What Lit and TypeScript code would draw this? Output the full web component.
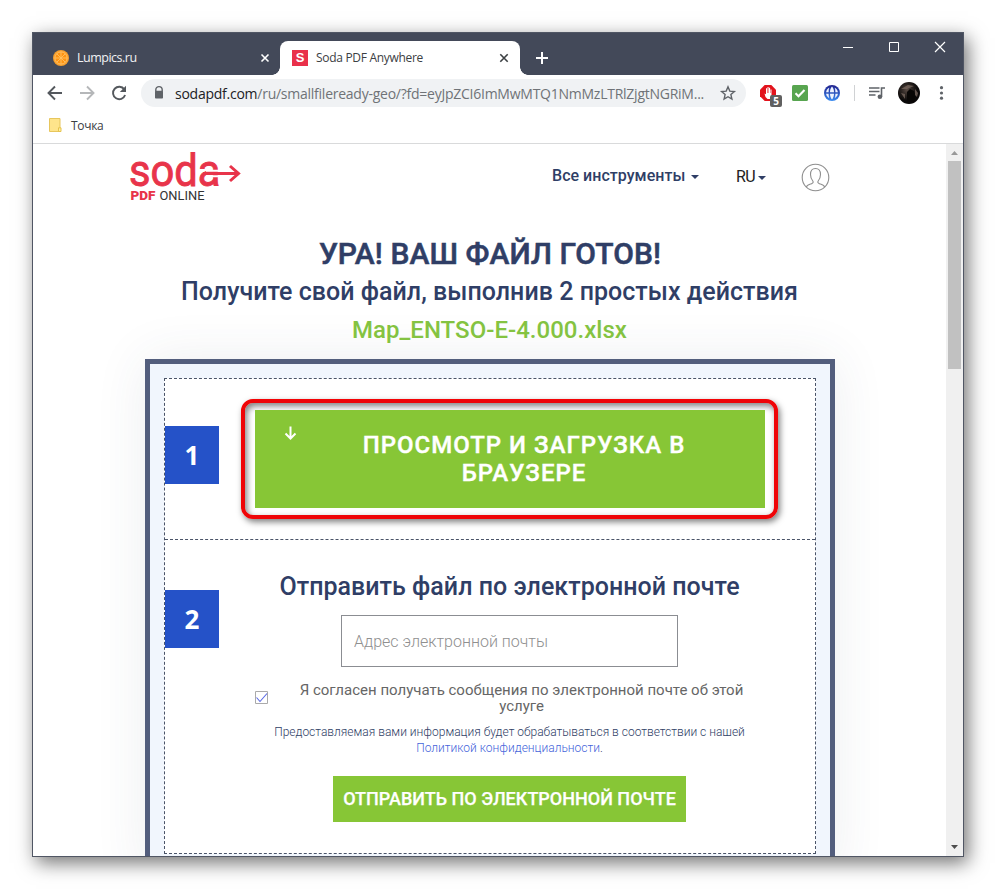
import { LitElement, html, css, svg } from "lit";
import { customElement } from "lit/decorators.js";

@customElement("browser-tabs")
class BrowserTabs extends LitElement {
  static styles = css`
    :host { display: flex; height: 42px; background: #434959; font: 12px/16px "Open Sans", "Noto Sans", sans-serif; color: #f1f2f4; }
    svg { display: block; flex: none; }
    .tab { display: flex; align-items: center; box-sizing: border-box; }
    .idle { width: 247px; padding: 8px 10px 0 20px; }
    .live { width: 240px; margin-top: 8px; padding: 0 11px 0 12px; background: #fff; border-radius: 8px 8px 0 0; color: #3c4043; position: relative; }
    .live::before, .live::after { content: ""; position: absolute; bottom: 0; width: 8px; height: 8px; }
    .live::before { left: -8px; background: radial-gradient(circle at 0 0, #434959 7.5px, #fff 8px); }
    .live::after { right: -8px; background: radial-gradient(circle at 100% 0, #434959 7.5px, #fff 8px); }
    .name { flex: 1; white-space: nowrap; }
    .idle .name { margin-left: 8px; letter-spacing: -0.2px; }
    .live .name { margin-left: 8px; letter-spacing: -0.3px; }
    .idle .name { letter-spacing: -0.5px; font-size: 12.5px; }
    .fav { width: 16px; height: 16px; background: #e9304a; color: #fff; font: 700 13px/16px "Liberation Sans", sans-serif; text-align: center; }
    .plus { margin: 18px 0 0 15px; }
    .controls { margin: 7px 17px 0 auto; display: flex; gap: 34px; }
  `;
  render() {
    return html`
      <div class="tab idle">
        <svg width="16" height="16" viewBox="0 0 16 16">
          <circle cx="8" cy="8" r="8" fill="#f9a02c" /><circle cx="8" cy="8" r="6.1" fill="#ff9412" stroke="#ffc56e" stroke-width=".8" />
          <path d="M8 2v12M2 8h12M3.8 3.8l8.4 8.4M12.2 3.8l-8.4 8.4" stroke="#ffc264" stroke-width=".9" />
        </svg>
        <span class="name">Lumpics.ru</span>
        <svg width="10" height="10" viewBox="0 0 10 10"><path d="M1.5 1.5l7 7M8.5 1.5l-7 7" stroke="#fff" stroke-width="1.6" /></svg>
      </div>
      <div class="tab live">
        <span class="fav">S</span><span class="name">Soda PDF Anywhere</span>
        <svg width="10" height="10" viewBox="0 0 10 10"><path d="M1.3 1.3l7.4 7.4M8.7 1.3L1.3 8.7" stroke="#3c4043" stroke-width="1.6" /></svg>
      </div>
      <svg class="plus" width="14" height="14" viewBox="0 0 14 14"><path d="M7 1v12M1 7h12" stroke="#fff" stroke-width="2" /></svg>
      <div class="controls">
        <svg width="14" height="14" viewBox="0 0 14 14"><path d="M3 7.5h10" stroke="#fff" /></svg>
        <svg width="12" height="14" viewBox="0 0 12 14"><path d="M1.5 2.5h9v9h-9z" fill="none" stroke="#fff" /></svg>
        <svg width="12" height="14" viewBox="0 0 12 14"><path d="M1 2l10 10M11 2L1 12" stroke="#fff" stroke-width="1.2" /></svg>
      </div>`;
  }
}

@customElement("browser-toolbar")
class BrowserToolbar extends LitElement {
  static styles = css`
    :host { display: block; background: #fff; height: 68px; border-bottom: 1px solid #d9dadb; font-family: "Open Sans", "Noto Sans", sans-serif; }
    svg { display: block; flex: none; }
    .bar { display: flex; align-items: center; height: 36px; padding-left: 12px; }
    .nav { display: flex; gap: 12px; }
    .omni { display: flex; align-items: center; width: 605px; height: 28px; margin-left: 12px; padding: 0 8px 0 9px; box-sizing: border-box; border-radius: 14px; background: #f0f2f4; }
    .url { flex: 1; margin-left: 7px; font-size: 14px; color: #6f7377; white-space: nowrap; letter-spacing: -0.25px; }
    .host { color: #202124; }
    .ext { display: flex; align-items: center; margin-left: 14px; }
    .block { position: relative; width: 22px; height: 28px; margin-right: 10px; }
    .block svg { margin-top: 6px; }
    .count { position: absolute; left: 10px; top: 16px; width: 12px; height: 12px; border-radius: 2px; background: #606060; color: #fff; font: 700 10px/12px "Open Sans", sans-serif; text-align: center; }
    .rule { width: 1px; height: 16px; background: #d0d2d4; margin: 0 13px 0 14px; }
    .marks { display: flex; align-items: center; gap: 9px; height: 28px; padding-left: 16px; font-size: 12px; color: #3c4043; }
    .marks span { letter-spacing: -0.3px; }
  `;
  render() {
    return html`
      <div class="bar">
        <div class="nav">
          <svg width="20" height="20" viewBox="0 0 20 20"><path d="M17 10H4M10 3.5L3.5 10l6.5 6.5" fill="none" stroke="#54585d" stroke-width="1.9" /></svg>
          <svg width="20" height="20" viewBox="0 0 20 20"><path d="M3 10h13M10 3.5L16.5 10 10 16.5" fill="none" stroke="#b5b7b9" stroke-width="1.9" /></svg>
          <svg width="20" height="20" viewBox="0 0 20 20"><path d="M15.3 6.4A6.2 6.2 0 1 0 16.1 12" fill="none" stroke="#54585d" stroke-width="1.9" /><path d="M17 2.8V9h-6.2z" fill="#54585d" /></svg>
        </div>
        <div class="omni">
          <svg width="18" height="16" viewBox="0 0 18 16"><path d="M5.8 6.5V4.8a3.2 3.2 0 0 1 6.4 0v1.7" fill="none" stroke="#5f6368" stroke-width="1.4" /><rect x="5" y="5.8" width="8" height="7.7" rx=".8" fill="#5f6368" /></svg>
          <span class="url"><span class="host">sodapdf.com</span>/ru/smallfileready-geo/?fd=eyJpZCI6ImMwMTQ1NmMzLTRlZjgtNGRiM...</span>
          <svg width="20" height="20" viewBox="0 0 20 20"><path d="M10 3.8l1.8 4.3 4.6.4-3.5 3.1 1 4.5-3.9-2.4-3.9 2.4 1-4.5-3.5-3.1 4.6-.4z" fill="none" stroke="#5f6368" stroke-width="1.4" /></svg>
        </div>
        <div class="ext">
          <div class="block">
            <svg width="16" height="16" viewBox="0 0 16 16"><path d="M4.7 0h6.6L16 4.7v6.6L11.3 16H4.7L0 11.3V4.7z" fill="#e2131c" /><path d="M4.5 8.5l1 3.5 2 2h2.5l1.5-2V4.5h-1V8h-.4V2.8H9V8h-.4V2H7.5v6H7V3.3H6v6z" fill="#fff" /></svg>
            <span class="count">5</span>
          </div>
          <svg width="16" height="16" viewBox="0 0 16 16"><rect width="16" height="16" rx="1.5" fill="#58a550" /><path d="M3.5 8.300l3 3 6-6.300" fill="none" stroke="#fff" stroke-width="2.1" /></svg>
          <svg width="32" height="16" viewBox="-16 0 32 16"><defs><linearGradient id="g" x2="0" y2="1"><stop stop-color="#20208c" /><stop offset="1" stop-color="#3b8df2" /></linearGradient></defs><circle cx="8" cy="8" r="8" fill="url(#g)" /><path d="M5.300 2.800C3.500 3.800 2.400 5.200 2.100 7.200h2.500C4.600 5.500 4.800 4 5.300 2.800zM10.700 2.800c1.800 1 2.900 2.400 3.200 4.400h-2.500c0-1.700-.2-3.200-.7-4.400zM2.100 8.800h2.500c0 1.700.2 3.200.7 4.400-1.800-1-2.900-2.400-3.200-4.400zM13.900 8.800h-2.500c0 1.700-.2 3.200-.7 4.400 1.800-1 2.900-2.400 3.200-4.400zM8 1.500C6.600 3 6 5 6 7.200h4C10 5 9.400 3 8 1.500zM8 14.500C6.600 13 6 11 6 8.800h4c0 2.200-.6 4.200-2 5.700z" fill="#eef4ff" /></svg>
          <span class="rule"></span>
          <svg width="18" height="16" viewBox="0 0 18 16"><path d="M1 3h10.5M1 6.500h10.5M1 10h6.5M13.500 12V3H17" fill="none" stroke="#5f6368" stroke-width="1.6" /><circle cx="11.9" cy="11.8" r="2.3" fill="#5f6368" /></svg>
          <svg width="35" height="22" viewBox="-12 0 35 22"><defs><radialGradient id="p" cx=".4" cy=".35"><stop stop-color="#594b44" /><stop offset=".5" stop-color="#2b2421" /><stop offset="1" stop-color="#0a0808" /></radialGradient></defs><circle cx="11" cy="11" r="11" fill="url(#p)" /><path d="M9 10l3-3 4 2 1 3v8H9z" fill="#080605" /><path d="M3 7l7-4 6 1-7 3zM3 11l4 1v5zM17 7l3 4-1 4-2-2z" fill="#75655c" opacity=".8" /></svg>
          <svg width="38" height="16" viewBox="-18 0 38 16"><g fill="#5f6368"><circle cx="2.5" cy="2.7" r="1.6" /><circle cx="2.5" cy="8" r="1.6" /><circle cx="2.5" cy="13.2" r="1.6" /></g></svg>
        </div>
      </div>
      <div class="marks">
        <svg width="13" height="14" viewBox="0 0 13 14"><path d="M.5.5h10.500v13H.5z" fill="#fee48b" stroke="#e7c65d" /><path d="M9.5 13.500v-3.700h2.500v3.700z" fill="#ffef9f" stroke="#e5c34e" /></svg>
        <span>Точка</span>
      </div>`;
  }
}

const caret = svg`<path d="M0 0h8L4 4z" fill="#2f3e66" />`;

@customElement("soda-page")
class SodaPage extends LitElement {
  static styles = css`
    :host { display: block; flex: 1; height: 712px; overflow: hidden; background: #fff; font-family: Roboto, sans-serif; color: #2f3e66; }
    svg { display: block; flex: none; }
    .head { display: flex; height: 91px; align-items: flex-start; padding-left: 96px; }
    .logo text { font-family: Roboto, sans-serif; }
    .tools { display: flex; align-items: center; width: 147px; margin: 18px 0 0 311px; height: 26px; font-weight: 500; font-size: 16px; letter-spacing: 0.03px; }
    .tools svg { margin-left: auto; margin-top: 4px; }
    .lang { display: flex; align-items: center; width: 30px; margin: 19px 0 0 37px; height: 26px; font-size: 16px; color: #222; letter-spacing: -0.5px; }
    .lang svg { margin-left: auto; margin-top: 3px; }
    .user { margin: 19px 0 0 35px; }
    h1, h2, h3 { margin: 0; text-align: center; white-space: nowrap; }
    .titles { width: 690px; margin-left: 112px; }
    h1 { font-size: 30px; font-weight: 500; line-height: 38px; letter-spacing: 0.08px; -webkit-text-stroke: 0.55px #2f3e66; }
    h2 { font-size: 25px; font-weight: 500; line-height: 38px; letter-spacing: 0.03px; }
    .titles h2 { margin-left: -1px; }
    .file { font-size: 24px; color: #84c341; }
    .card { width: 690px; height: 520px; box-sizing: border-box; margin: 10px 0 0 112px; padding: 14px; border: 5px solid #535e7d; background: #f1f6fd; box-shadow: 0 0 50px rgba(60, 70, 90, 0.09); }
    .steps { width: 652px; height: 476px; box-sizing: border-box; border: 1px dashed #4a5468; background: #fff; }
    .step { display: flex; align-items: flex-start; }
    .one { height: 160px; border-bottom: 1px dashed #4a5468; }
    .num { width: 54px; height: 58px; background: #2552c8; color: #fff; font: 700 26px/58px "Open Sans", sans-serif; text-align: center; }
    .one .num { margin-top: 47px; }
    .two .num { margin-top: 50px; }
    .ring { display: flex; box-sizing: border-box; width: 537px; height: 120px; margin: 20px 0 0 22px; padding: 7px 8px 5px 10px; border: 4px solid #ee0508; border-radius: 12px; outline: 1px solid #ff000055; outline-offset: -1px; box-shadow: 2px 3px 6px rgba(0, 0, 0, 0.5), inset 2px 3px 6px rgba(0, 0, 0, 0.5); }
    .view { flex: none; display: flex; align-items: flex-start; box-sizing: border-box; width: 510px; height: 98px; border: 0; margin: 0; padding: 16px 0 0 28px; background: #87c636; color: #fff; font: 500 24px/28px Roboto, sans-serif; letter-spacing: 1px; text-align: center; -webkit-text-stroke: 0.4px #fff; }
    .view span { flex: none; width: 400px; margin-left: 26px; padding-top: 5px; }
    .form { width: 509px; margin: 26px 0 0 36px; display: flex; flex-direction: column; align-items: center; }
    h3 { font-size: 25px; font-weight: 500; line-height: 41px; letter-spacing: 0.03px; }
    .field { box-sizing: border-box; width: 337px; height: 52px; margin-top: 8px; padding: 0 12px; border: 1px solid #8b8d92; font: 300 16px/50px Roboto, sans-serif; color: #8f8f8f; }
    .field::placeholder { color: #8f8f8f; opacity: 1; }
    .agree { display: flex; width: 509px; margin-top: 15px; font-size: 15px; line-height: 16px; color: #666; text-align: center; }
    .agree svg { margin: 9px 11px 0 0; }
    .agree span { flex: 1; white-space: nowrap; }
    .note { margin-top: 10px; font-size: 12px; font-weight: 300; line-height: 16px; text-align: center; white-space: nowrap; }
    .link { color: #4564da; }
    .send { box-sizing: border-box; width: 353px; height: 46px; margin: 20px 0 0; padding: 0; border: 0; background: #87c636; color: #fff; font: 500 18px/46px Roboto, sans-serif; white-space: nowrap; -webkit-text-stroke: 0.25px #fff; }
  `;
  render() {
    return html`
      <div class="head">
        <svg class="logo" width="112" height="70" viewBox="129 144 112 70">
          <text x="129" y="185.500" font-size="45" font-weight="400" fill="#e8344a" stroke="#e8344a" stroke-width=".9" textLength="91.500" lengthAdjust="spacingAndGlyphs">soda</text>
          <path d="M206 169.800h13v2h-13zM206 175.200h13v2h-13z" fill="#fff" /><path d="M203 173.500h35M230 166l8.500 7.500-8.500 7.500" fill="none" stroke="#e8344a" stroke-width="3" />
          <text x="130.500" y="200" font-size="12.500" font-weight="900" fill="#e8344a" textLength="25" lengthAdjust="spacingAndGlyphs">PDF</text>
          <text x="159.500" y="200" font-size="12.500" fill="#333" textLength="45" lengthAdjust="spacingAndGlyphs">ONLINE</text>
        </svg>
        <div class="tools"><span>Все инструменты</span><svg width="8" height="4">${caret}</svg></div>
        <div class="lang"><span>RU</span><svg width="8" height="4">${caret}</svg></div>
        <svg class="user" width="29" height="29" viewBox="0 0 29 29"><g fill="none" stroke="#8e8e8e" stroke-width="1.1"><circle cx="14.5" cy="14.5" r="13.3" /><path d="M5.3 24c.5-2 2.2-2.300 5.200-3.300 1.800-.6 2-1.600 1.300-2.700-1.400-1.800-2.300-3.500-2.300-6.500 0-3.800 1.800-6 5-6s5 2.200 5 6c0 3-.9 4.700-2.300 6.500-.7 1.100-.5 2.100 1.300 2.700 3 1 4.700 1.300 5.200 3.300" /></g></svg>
      </div>
      <div class="titles">
        <h1>УРА! ВАШ ФАЙЛ ГОТОВ!</h1>
        <h2>Получите свой файл, выполнив 2 простых действия</h2>
        <h2 class="file">Map_ENTSO-E-4.000.xlsx</h2>
      </div>
      <div class="card">
        <div class="steps">
          <div class="step one">
            <div class="num">1</div>
            <div class="ring">
              <button class="view">
                <svg width="15" height="15" viewBox="0 0 15 15"><path d="M7.5.5v12M2.500 7.500l5 5 5-5" fill="none" stroke="#fff" stroke-width="2" /></svg>
                <span>ПРОСМОТР И ЗАГРУЗКА В<br />БРАУЗЕРЕ</span>
              </button>
            </div>
          </div>
          <div class="step two">
            <div class="num">2</div>
            <div class="form">
              <h3>Отправить файл по электронной почте</h3>
              <input class="field" placeholder="Адрес электронной почты" />
              <label class="agree">
                <svg width="13" height="13" viewBox="0 0 13 13"><path d="M.5.5h12v12H.5z" fill="#fff" stroke="#aaa" /><path d="M1.500 6.500l3.500 4 7-8" fill="none" stroke="#5a69e6" stroke-width="1.1" /></svg>
                <span>Я согласен получать сообщения по электронной почте об этой<br />услуге</span>
              </label>
              <div class="note">Предоставляемая вами информация будет обрабатываться в соответствии с нашей<br /><span class="link">Политикой конфиденциальности</span>.</div>
              <button class="send">ОТПРАВИТЬ ПО ЭЛЕКТРОННОЙ ПОЧТЕ</button>
            </div>
          </div>
        </div>
      </div>`;
  }
}

@customElement("app-root")
class AppRoot extends LitElement {
  static styles = css`
    :host { display: block; box-sizing: border-box; width: 996px; height: 889px; padding: 32px; overflow: hidden; background: #fff; }
    .window { width: 932px; height: 825px; box-sizing: border-box; border: 1px solid #505664; background: #fff; box-shadow: 4px 6px 18px rgba(0, 0, 0, 0.55); }
    .body { display: flex; height: 712px; }
    .scroll { display: flex; flex-direction: column; align-items: center; width: 17px; background: #f0f0f0; }
    .scroll svg { display: block; }
    .thumb { width: 13px; height: 208px; margin-bottom: auto; background: #c1c1c1; }
  `;
  render() {
    return html`
      <div class="window">
        <browser-tabs></browser-tabs>
        <browser-toolbar></browser-toolbar>
        <div class="body">
          <soda-page></soda-page>
          <div class="scroll">
            <svg width="17" height="17"><path d="M5 11l3.5-4 3.5 4z" fill="#989898" /></svg>
            <div class="thumb"></div>
            <svg width="17" height="17"><path d="M5 6h7L8.5 10z" fill="#4d4d4d" /></svg>
          </div>
        </div>
      </div>`;
  }
}
